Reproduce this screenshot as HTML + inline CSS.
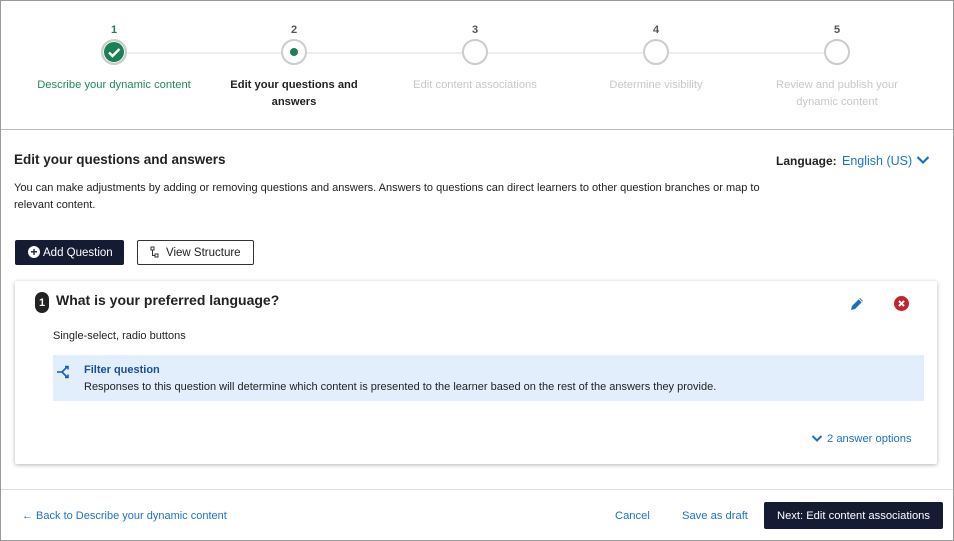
<!DOCTYPE html>
<html><head><style>
*{margin:0;padding:0;box-sizing:border-box}
body{width:954px;height:541px;background:#fff;font-family:"Liberation Sans",sans-serif;color:#222;position:relative;overflow:hidden}
.a{position:absolute;white-space:nowrap}
.frame{position:absolute;left:0;top:0;width:954px;height:541px;border:1px solid #999}
.num{font-size:11px;font-weight:bold;color:#555;width:20px;text-align:center}
.circ{position:absolute;width:26px;height:26px;border-radius:50%;border:2px solid #ccc;background:#fff}
.lbl{font-size:11.2px;text-align:center;width:170px;line-height:17px;white-space:normal}
.blue{color:#1a73c8}
</style></head><body>
<div class="frame"></div>
<div class="a" style="left:114px;top:52px;width:724px;height:2px;background:#eee"></div>
<div class="a num" style="left:104px;top:24px;color:#1d7f55">1</div>
<div class="a num" style="left:284px;top:24px">2</div>
<div class="a num" style="left:465px;top:24px">3</div>
<div class="a num" style="left:646px;top:24px">4</div>
<div class="a num" style="left:827px;top:24px">5</div>
<div class="circ" style="left:101px;top:39px;border-color:#ccc;background:#1d7f55;box-shadow:inset 0 0 0 1px #fff"><svg width="22" height="22" viewBox="0 0 22 22"><path d="M6 11.5l3.5 3.5 7-7" stroke="#fff" stroke-width="2.4" fill="none"/></svg></div>
<div class="circ" style="left:281px;top:39px"><div style="position:absolute;left:7px;top:7px;width:8px;height:8px;border-radius:50%;background:#1d7f55"></div></div>
<div class="circ" style="left:462px;top:39px"></div>
<div class="circ" style="left:643px;top:39px"></div>
<div class="circ" style="left:824px;top:39px"></div>
<div class="a lbl" style="left:29px;top:77px;color:#1d8a5a">Describe your dynamic content</div>
<div class="a lbl" style="left:224px;top:77px;font-weight:bold;color:#222;width:140px">Edit your questions and answers</div>
<div class="a lbl" style="left:390px;top:77px;color:#c8c8c8">Edit content associations</div>
<div class="a lbl" style="left:571px;top:77px;color:#c8c8c8">Determine visibility</div>
<div class="a lbl" style="left:767px;top:77px;color:#c8c8c8;width:140px">Review and publish your dynamic content</div>
<div class="a" style="left:1px;top:129px;width:952px;height:1px;background:#bbb"></div>
<div class="a" style="left:14px;top:152px;font-size:13.5px;font-weight:bold;color:#222">Edit your questions and answers</div>
<div class="a" style="left:776px;top:154px;font-size:12px;font-weight:bold">Language:</div>
<div class="a blue" style="left:842px;top:154px;font-size:12.5px">English (US)</div>
<svg class="a" style="left:916px;top:155px" width="14" height="10" viewBox="0 0 14 10"><path d="M1.5 2l5.5 5.5 5.5-5.5" stroke="#1a6fc0" stroke-width="2.2" fill="none"/></svg>
<div class="a" style="left:14px;top:180px;font-size:11px;line-height:17px;white-space:normal;width:765px;color:#222">You can make adjustments by adding or removing questions and answers. Answers to questions can direct learners to other question branches or map to relevant content.</div>
<div class="a" style="left:15px;top:240px;width:109px;height:25px;background:#141b33;border-radius:2px;color:#fff;font-size:11.5px;line-height:26px;padding-left:28px">Add Question</div>
<div class="a" style="left:28px;top:246px;width:12px;height:12px;border-radius:50%;background:#fff;color:#141b33;font-size:12px;font-weight:bold;line-height:12px;text-align:center">+</div>
<div class="a" style="left:137px;top:240px;width:117px;height:25px;border:1px solid #333;border-radius:2px;font-size:11.5px;line-height:24px;padding-left:28px">View Structure</div>
<svg class="a" style="left:150px;top:246px" width="10" height="12" viewBox="0 0 10 12"><rect x="1" y="1" width="3" height="3" fill="none" stroke="#333"/><rect x="5" y="8" width="3" height="3" fill="none" stroke="#333"/><path d="M2.5 4v5.5h2.5" fill="none" stroke="#333"/></svg>
<div class="a" style="left:15px;top:281px;width:922px;height:183px;background:#fff;box-shadow:0 1px 4px rgba(0,0,0,0.3);border-radius:2px"></div>
<div class="a" style="left:35px;top:292px;width:14px;height:21px;border-radius:7px;background:#222;color:#fff;font-size:11px;font-weight:bold;text-align:center;line-height:23px">1</div>
<div class="a" style="left:56px;top:292px;font-size:14px;font-weight:bold;color:#222">What is your preferred language?</div>
<svg class="a" style="left:849px;top:296px" width="16" height="16" viewBox="0 0 16 16"><path d="M2 14l1-4 8-8 3 3-8 8z" fill="#1a6fc0"/><path d="M10 3l3 3" stroke="#fff" stroke-width="1"/></svg>
<div class="a" style="left:894px;top:296px;width:15px;height:15px;border-radius:50%;background:#c0262d"><svg width="15" height="15" viewBox="0 0 15 15"><path d="M5 5l5 5M10 5l-5 5" stroke="#fff" stroke-width="2"/></svg></div>
<div class="a" style="left:53px;top:330px;font-size:11px">Single-select, radio buttons</div>
<div class="a" style="left:53px;top:355px;width:871px;height:46px;background:#e3eefc"></div>
<svg class="a" style="left:56px;top:365px" width="16" height="14" viewBox="0 0 16 14"><path d="M1 7h5l5-5M6 7l5 5M9 1.5h3v3M9 12.5h3v-3" stroke="#1a5fb0" stroke-width="1.6" fill="none"/></svg>
<div class="a" style="left:84px;top:364px;font-size:11px;font-weight:bold;color:#1a4f9c">Filter question</div>
<div class="a" style="left:84px;top:381px;font-size:11px">Responses to this question will determine which content is presented to the learner based on the rest of the answers they provide.</div>
<svg class="a" style="left:811px;top:434px" width="12" height="9" viewBox="0 0 12 9"><path d="M1.5 2l4.5 4.5 4.5-4.5" stroke="#1a6fc0" stroke-width="2" fill="none"/></svg>
<div class="a blue" style="left:827px;top:433px;font-size:11.2px">2 answer options</div>
<div class="a" style="left:1px;top:489px;width:952px;height:1px;background:#ddd"></div>
<div class="a blue" style="left:22px;top:510px;font-size:11px">&#8592; Back to Describe your dynamic content</div>
<div class="a blue" style="left:615px;top:510px;font-size:11.2px">Cancel</div>
<div class="a blue" style="left:682px;top:510px;font-size:11.2px">Save as draft</div>
<div class="a" style="left:764px;top:502px;width:179px;height:27px;background:#141b33;border-radius:2px;color:#fff;font-size:11.2px;line-height:28px;text-align:center">Next: Edit content associations</div>
</body></html>
